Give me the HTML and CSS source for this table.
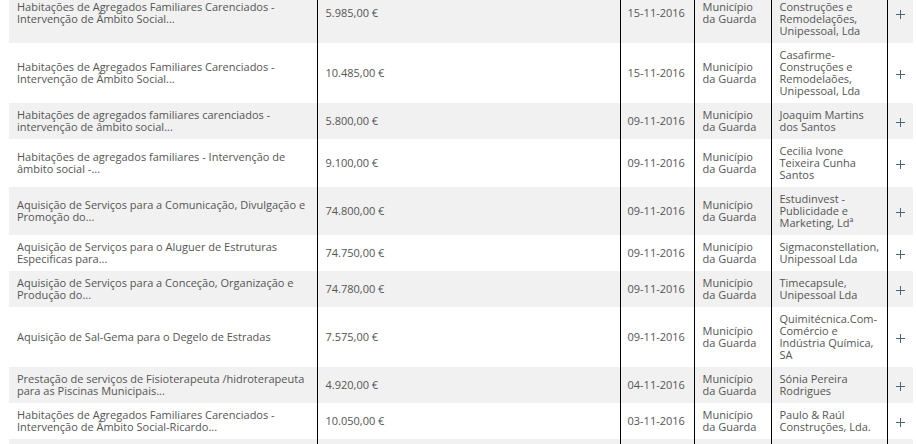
FILE: index.html
```html
<!DOCTYPE html>
<html lang="pt">
<head>
<meta charset="utf-8">
<link rel="stylesheet" href="styles.css">
</head>
<body>
<div class="wrap">
<table class="contracts">
<colgroup>
<col class="c-desc"><col class="c-val"><col class="c-date"><col class="c-ent"><col class="c-comp"><col class="c-plus">
</colgroup>
<tbody>
<tr><td>Habitações de Agregados Familiares Carenciados - Intervenção de Âmbito Social...</td><td>5.985,00 €</td><td class="date">15-11-2016</td><td>Município da Guarda</td><td>Casafirme- Construções e Remodelações, Unipessoal, Lda</td><td class="plus"><svg viewBox="0 0 9 9" width="9" height="9"><path d="M4.5 0v9M0 4.5h9"/></svg></td></tr>
<tr><td>Habitações de Agregados Familiares Carenciados - Intervenção de Âmbito Social...</td><td>10.485,00 €</td><td class="date">15-11-2016</td><td>Município da Guarda</td><td>Casafirme- Construções e Remodelaões, Unipessoal, Lda</td><td class="plus"><svg viewBox="0 0 9 9" width="9" height="9"><path d="M4.5 0v9M0 4.5h9"/></svg></td></tr>
<tr><td>Habitações de agregados familiares carenciados - intervenção de âmbito social...</td><td>5.800,00 €</td><td class="date">09-11-2016</td><td>Município da Guarda</td><td>Joaquim Martins dos Santos</td><td class="plus"><svg viewBox="0 0 9 9" width="9" height="9"><path d="M4.5 0v9M0 4.5h9"/></svg></td></tr>
<tr><td>Habitações de agregados familiares - Intervenção de âmbito social -...</td><td>9.100,00 €</td><td class="date">09-11-2016</td><td>Município da Guarda</td><td>Cecilia Ivone Teixeira Cunha Santos</td><td class="plus"><svg viewBox="0 0 9 9" width="9" height="9"><path d="M4.5 0v9M0 4.5h9"/></svg></td></tr>
<tr><td>Aquisição de Serviços para a Comunicação, Divulgação e Promoção do...</td><td>74.800,00 €</td><td class="date">09-11-2016</td><td>Município da Guarda</td><td>Estudinvest - Publicidade e Marketing, Ldª</td><td class="plus"><svg viewBox="0 0 9 9" width="9" height="9"><path d="M4.5 0v9M0 4.5h9"/></svg></td></tr>
<tr><td>Aquisição de Serviços para o Aluguer de Estruturas Especificas para...</td><td>74.750,00 €</td><td class="date">09-11-2016</td><td>Município da Guarda</td><td>Sigmaconstellation, Unipessoal Lda</td><td class="plus"><svg viewBox="0 0 9 9" width="9" height="9"><path d="M4.5 0v9M0 4.5h9"/></svg></td></tr>
<tr><td>Aquisição de Serviços para a Conceção, Organização e Produção do...</td><td>74.780,00 €</td><td class="date">09-11-2016</td><td>Município da Guarda</td><td>Timecapsule, Unipessoal Lda</td><td class="plus"><svg viewBox="0 0 9 9" width="9" height="9"><path d="M4.5 0v9M0 4.5h9"/></svg></td></tr>
<tr><td>Aquisição de Sal-Gema para o Degelo de Estradas</td><td>7.575,00 €</td><td class="date">09-11-2016</td><td>Município da Guarda</td><td>Quimitécnica.Com-Comércio e Indústria Química, SA</td><td class="plus"><svg viewBox="0 0 9 9" width="9" height="9"><path d="M4.5 0v9M0 4.5h9"/></svg></td></tr>
<tr><td>Prestação de serviços de Fisioterapeuta /hidroterapeuta para as Piscinas Municipais...</td><td>4.920,00 €</td><td class="date">04-11-2016</td><td>Município da Guarda</td><td>Sónia Pereira Rodrigues</td><td class="plus"><svg viewBox="0 0 9 9" width="9" height="9"><path d="M4.5 0v9M0 4.5h9"/></svg></td></tr>
<tr><td>Habitações de Agregados Familiares Carenciados - Intervenção de Âmbito Social-Ricardo...</td><td>10.050,00 €</td><td class="date">03-11-2016</td><td>Município da Guarda</td><td>Paulo &amp; Raúl Construções, Lda.</td><td class="plus"><svg viewBox="0 0 9 9" width="9" height="9"><path d="M4.5 0v9M0 4.5h9"/></svg></td></tr>
<tr class="tail"><td></td><td></td><td></td><td></td><td></td><td class="plus"></td></tr>
</tbody>
</table>
</div>
</body>
</html>
```
FILE: styles.css
```css
html, body {
  margin: 0;
  padding: 0;
  background: #fff;
  overflow: hidden;
}
.wrap {
  margin-top: -17px;
  padding-left: 9px;
}
.contracts {
  border-collapse: collapse;
  table-layout: fixed;
  width: 904px;
  font-family: "Open Sans", "Liberation Sans", sans-serif;
  font-size: 11px;
  line-height: 12px;
  color: #555;
}
.c-desc { width: 308px; }
.c-val { width: 303px; }
.c-date { width: 74px; }
.c-ent { width: 77px; }
.c-comp { width: 116px; }
.c-plus { width: 26px; }
.contracts tr:nth-child(odd) { background: #f1f1f1; }
.contracts tr:nth-child(even) { background: #fff; }
.contracts td {
  padding: 6px 8px;
  vertical-align: middle;
  border-right: 1px solid #000;
  text-align: left;
}
.contracts td.date {
  white-space: nowrap;
  padding-left: 7px;
  padding-right: 6px;
}
.contracts tr.tail td {
  height: 24px;
}
.contracts td.plus {
  border-right: none;
  padding: 0;
  text-align: center;
}
.plus svg {
  display: inline-block;
  vertical-align: middle;
  stroke: #4a6478;
  stroke-width: 1;
  fill: none;
}
```
